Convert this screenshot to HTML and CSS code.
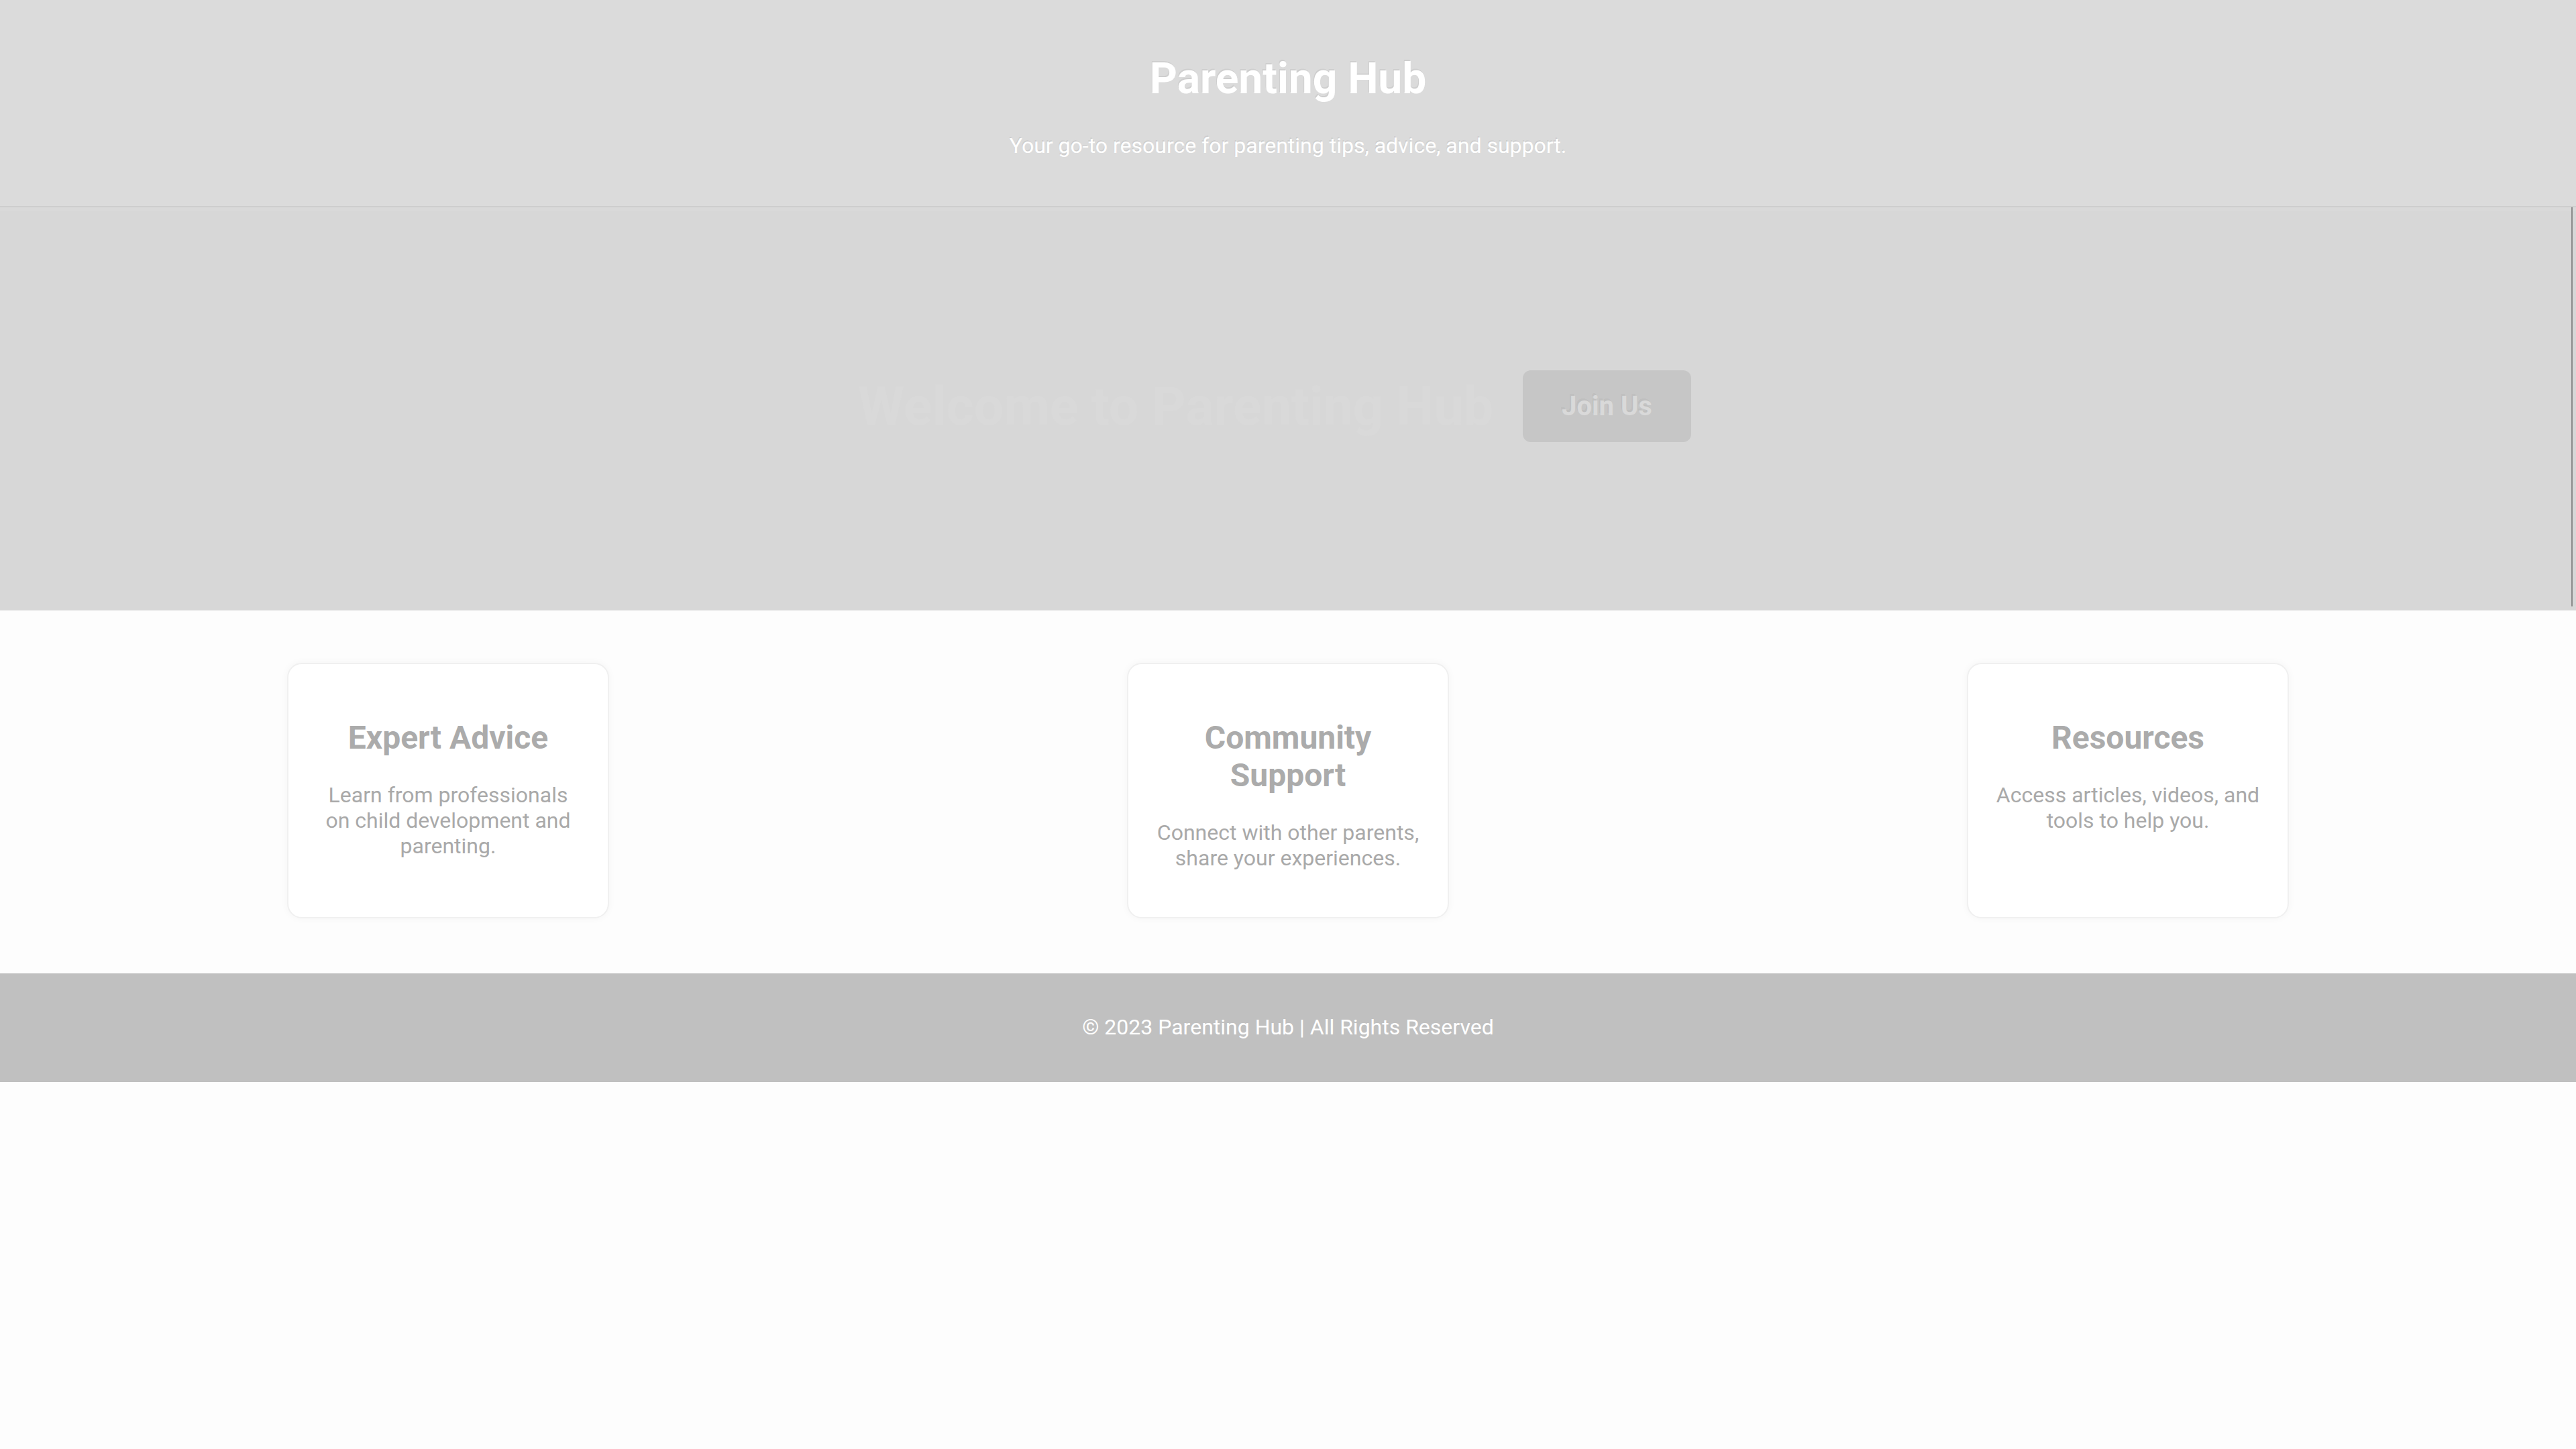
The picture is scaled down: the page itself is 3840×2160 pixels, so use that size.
FILE: index.html
```html
<!DOCTYPE html>
<html lang="en">
<head>
<meta charset="utf-8">
<title>Parenting Hub</title>
<link rel="stylesheet" href="styles.css">
</head>
<body>
<header class="site-header">
  <h1 class="site-title">Parenting Hub</h1>
  <p class="site-tagline">Your go-to resource for parenting tips, advice, and support.</p>
</header>
<section class="hero">
  <h2 class="hero-title">Welcome to Parenting Hub</h2>
  <button class="hero-button">Join Us</button>
</section>
<section class="features">
  <div class="card">
    <h2 class="card-title">Expert Advice</h2>
    <p class="card-text">Learn from professionals on child development and parenting.</p>
  </div>
  <div class="card">
    <h2 class="card-title">Community Support</h2>
    <p class="card-text">Connect with other parents, share your experiences.</p>
  </div>
  <div class="card">
    <h2 class="card-title">Resources</h2>
    <p class="card-text">Access articles, videos, and tools to help you.</p>
  </div>
</section>
<footer class="site-footer">
  <p class="footer-text">&copy; 2023 Parenting Hub | All Rights Reserved</p>
</footer>
</body>
</html>
```
FILE: styles.css
```css
html, body {
  margin: 0;
  padding: 0;
}
body {
  font-family: Roboto, "Liberation Sans", Arial, sans-serif;
  font-size: 32px;
  background: #fdfdfd;
}
.site-header {
  background: #dbdbdb;
  text-align: center;
  padding: 80px 0 71px;
  border-bottom: 2px solid #cdcdcd;
}
.site-title {
  margin: 0 0 44px;
  font-size: 64px;
  font-weight: 700;
  color: #ffffff;
  line-height: 75px;
  text-shadow: -1px -2px 0 rgba(0, 0, 0, 0.06);
}
.site-tagline {
  margin: 0;
  font-size: 32px;
  line-height: 37px;
  color: #ffffff;
  text-shadow: -1px -2px 0 rgba(0, 0, 0, 0.06);
}
.hero {
  position: relative;
  background: #d7d7d7;
  border-top: 6px solid #d9d9d9;
  display: flex;
  align-items: center;
  justify-content: center;
  gap: 44px;
  padding: 237px 40px 251px 0;
}
.hero::after {
  content: "";
  position: absolute;
  right: 5px;
  top: -6px;
  bottom: 6px;
  width: 2px;
  background: #8a8a8a;
}
.hero-title {
  margin: 0;
  font-size: 79px;
  font-weight: 700;
  color: #d9d9d9;
  line-height: 94px;
}
.hero-button {
  font-family: Roboto, "Liberation Sans", Arial, sans-serif;
  font-size: 40px;
  font-weight: 700;
  color: #d9d9d9;
  background: #c6c6c6;
  border: none;
  border-radius: 12px;
  padding: 30px 58px;
  line-height: 47px;
  text-shadow: -2px -3px 0 rgba(0, 0, 0, 0.05);
}
.features {
  display: flex;
  justify-content: space-around;
  align-items: stretch;
  padding: 78px 42px 82px;
  background: #fdfdfd;
}
.card {
  box-sizing: border-box;
  width: 480px;
  padding: 40px;
  background: #ffffff;
  border: 2px solid #f0f0f0;
  border-radius: 22px;
  box-shadow: 0 0 12px rgba(0, 0, 0, 0.04);
  text-align: center;
}
.card-title {
  margin: 42px 0 38px;
  font-size: 48px;
  font-weight: 700;
  line-height: 56px;
  color: #ababab;
}
.card-text {
  margin: 0 0 29px;
  font-size: 32px;
  line-height: 38px;
  color: #a9a9a9;
}
.site-footer {
  background: #c0c0c0;
  text-align: center;
  padding: 62px 0 63px;
}
.footer-text {
  margin: 0;
  font-size: 32px;
  line-height: 37px;
  color: #ffffff;
}
```
